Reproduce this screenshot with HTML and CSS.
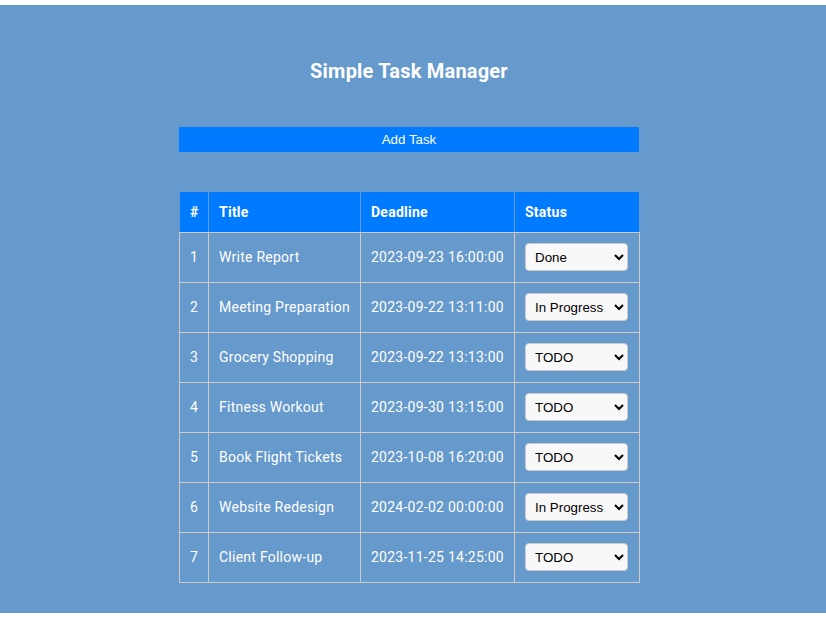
FILE: index.html
```html
<!DOCTYPE html>
<html>
<head>
<meta charset="utf-8">
<link rel="stylesheet" href="styles.css">
</head>
<body>
<div class="app">
  <h1 class="title">Simple Task Manager</h1>
  <div class="wrap">
    <button class="add-btn">Add Task</button>
    <table class="tasks">
      <colgroup>
        <col class="c-num"><col class="c-title"><col class="c-deadline"><col class="c-status">
      </colgroup>
      <thead>
        <tr><th>#</th><th>Title</th><th>Deadline</th><th>Status</th></tr>
      </thead>
      <tbody>
        <tr><td>1</td><td>Write Report</td><td>2023-09-23 16:00:00</td><td><select class="status"><option>TODO</option><option>In Progress</option><option selected>Done</option></select></td></tr>
        <tr><td>2</td><td>Meeting Preparation</td><td>2023-09-22 13:11:00</td><td><select class="status"><option>TODO</option><option selected>In Progress</option><option>Done</option></select></td></tr>
        <tr><td>3</td><td>Grocery Shopping</td><td>2023-09-22 13:13:00</td><td><select class="status"><option selected>TODO</option><option>In Progress</option><option>Done</option></select></td></tr>
        <tr><td>4</td><td>Fitness Workout</td><td>2023-09-30 13:15:00</td><td><select class="status"><option selected>TODO</option><option>In Progress</option><option>Done</option></select></td></tr>
        <tr><td>5</td><td>Book Flight Tickets</td><td>2023-10-08 16:20:00</td><td><select class="status"><option selected>TODO</option><option>In Progress</option><option>Done</option></select></td></tr>
        <tr><td>6</td><td>Website Redesign</td><td>2024-02-02 00:00:00</td><td><select class="status"><option>TODO</option><option selected>In Progress</option><option>Done</option></select></td></tr>
        <tr><td>7</td><td>Client Follow-up</td><td>2023-11-25 14:25:00</td><td><select class="status"><option selected>TODO</option><option>In Progress</option><option>Done</option></select></td></tr>
      </tbody>
    </table>
  </div>
</div>
</body>
</html>
```
FILE: styles.css
```css
html, body {
  margin: 0;
  padding: 0;
  background: #fff;
}
body {
  padding: 5px 0 6px;
  font-family: Roboto, "Liberation Sans", Arial, sans-serif;
}
.app {
  background: #6699cc;
  height: 608px;
  box-sizing: border-box;
  padding: 54px 8px 0 0;
  color: #fff;
}
.title {
  margin: 0;
  text-align: center;
  font-size: 20px;
  line-height: 24px;
  font-weight: 700;
  letter-spacing: 0.2px;
}
.wrap {
  width: 460px;
  margin: 44px auto 0;
  display: flex;
  flex-direction: column;
  gap: 40px;
}
.add-btn {
  display: block;
  width: 460px;
  height: 25px;
  margin: 0;
  padding: 0;
  border: none;
  background: #007bff;
  color: #fff;
  font-family: "Liberation Sans", Arial, sans-serif;
  font-size: 13.333px;
  line-height: 25px;
}
.tasks {
  width: 460px;
  border-collapse: collapse;
  table-layout: fixed;
  font-size: 14px;
  letter-spacing: 0.25px;
}
.c-num { width: 29px; }
.c-title { width: 152px; }
.c-deadline { width: 154px; }
.c-status { width: 125px; }
.tasks th {
  background: #007bff;
  border: 1px solid #6699cc;
  border-top: none;
  border-bottom-color: #d0cac4;
  text-align: left;
  font-weight: 700;
  height: 40px;
  padding: 0 10px;
  box-sizing: border-box;
}
.tasks td {
  border: 1px solid #d0cac4;
  padding: 0 10px;
  height: 50px;
  box-sizing: border-box;
  vertical-align: middle;
  white-space: nowrap;
}
.status {
  width: 103px;
  height: 28px;
  box-sizing: border-box;
  padding: 0 0 0 5px;
  border: 1px solid #ccc;
  border-radius: 4px;
  background-color: #f8f8f8;
  color: #000;
  font-family: "Liberation Sans", Arial, sans-serif;
  font-size: 13.333px;
  letter-spacing: 0;
  vertical-align: middle;
}
```
